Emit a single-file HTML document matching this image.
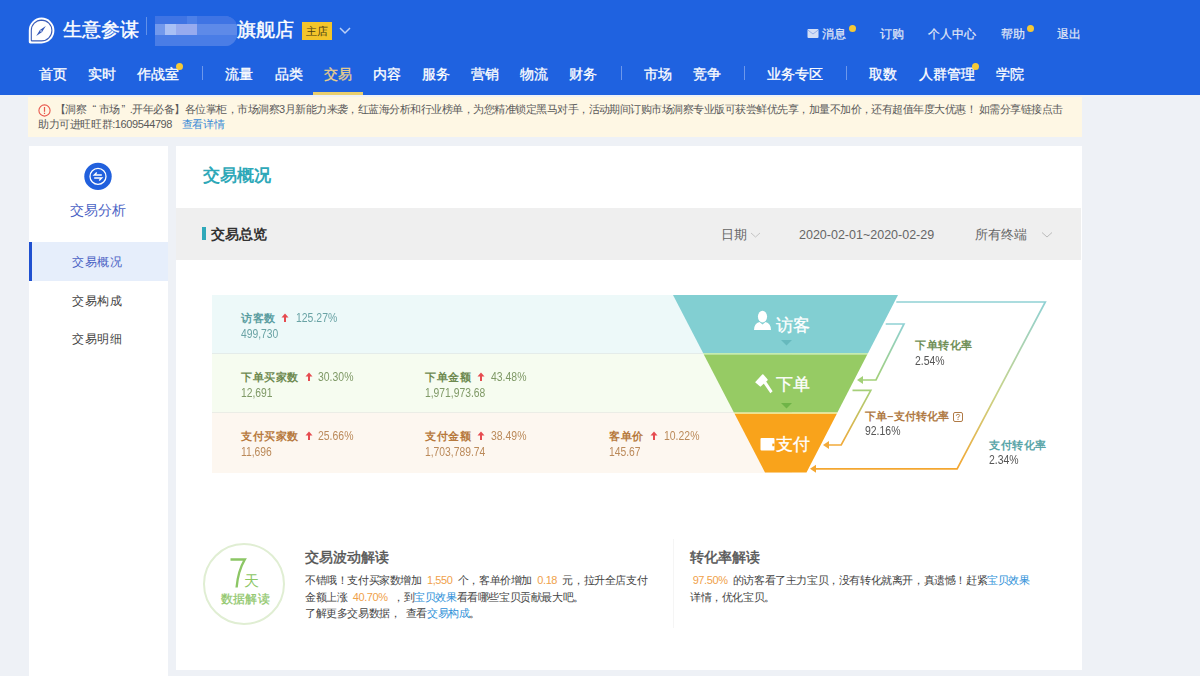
<!DOCTYPE html>
<html><head><meta charset="utf-8">
<style>
*{margin:0;padding:0;box-sizing:border-box}
html,body{width:1200px;height:676px;overflow:hidden;background:#eef1f6;font-family:"Liberation Sans",sans-serif;color:#333}
.abs{position:absolute;white-space:nowrap}
#hdr{position:absolute;left:0;top:0;width:1200px;height:95px;background:#1f62e0}
.nav{position:absolute;top:65px;-webkit-text-stroke:0.3px currentColor;font-size:14px;color:#fff;line-height:18px}
.dot{position:absolute;width:7px;height:7px;border-radius:50%;background:#f5c936}
.vdiv{position:absolute;top:66px;width:1px;height:14px;background:rgba(255,255,255,.35)}
.tr{position:absolute;top:26px;font-size:12px;-webkit-text-stroke:0.2px currentColor;color:#e3e9f7;line-height:16px}
#notice{position:absolute;left:28px;top:97px;width:1054px;height:40px;background:#fef7e4}
#side{position:absolute;left:29px;top:146px;width:139px;height:530px;background:#fff}
#main{position:absolute;left:176px;top:146px;width:906px;height:524px;background:#fff}
.lb{position:absolute;font-size:11px;line-height:14px;font-weight:bold;white-space:nowrap;letter-spacing:0.6px}
.pc{position:absolute;font-size:12px;line-height:14px;white-space:nowrap;transform:scaleX(0.87);transform-origin:0 0}
.vl{position:absolute;font-size:12px;line-height:14px;white-space:nowrap;transform:scaleX(0.86);transform-origin:0 0}
.up{position:absolute;width:8px;height:9px}
</style></head><body>
<div id="hdr">
  <!-- logo -->
  <svg class="abs" style="left:28px;top:17px" width="28" height="28" viewBox="0 0 28 28">
    <path d="M13.5 0.6 A12.9 12.9 0 1 1 13.5 26.4 L2.2 26.4 Q0.8 26.4 0.8 25 L0.8 13.5 A12.9 12.9 0 0 1 13.5 0.6 Z" fill="#fff"/>
    <path d="M13.5 3.1 A10.4 10.4 0 1 1 13.5 23.9 L4 23.9 Q3.3 23.9 3.3 23.2 L3.3 13.5 A10.4 10.4 0 0 1 13.5 3.1 Z" fill="#fff" stroke="#3a5cb8" stroke-width="1.1"/>
    <path d="M17.8 9.1 L14.1 15.1 L8.2 18.9 L11.9 12.9 Z" fill="#3357b8"/>
    <circle cx="13" cy="14" r="0.8" fill="#fff"/>
  </svg>
  <div class="abs" style="left:63px;top:19px;font-size:19px;color:#fff;line-height:22px;-webkit-text-stroke:0.4px #fff">生意参谋</div>
  <div class="abs" style="left:146px;top:17px;width:1px;height:18px;background:rgba(255,255,255,.3)"></div>
  <div class="abs" style="left:155px;top:16px;width:82px;height:30px;border-radius:0 12px 12px 0;overflow:hidden;background:#4c7fe6;filter:blur(0.7px)">
    <div class="abs" style="left:0;top:0;width:82px;height:8px;background:#3f74e4"></div>
    <div class="abs" style="left:32px;top:0;width:10px;height:8px;background:#4d80e8"></div>
    <div class="abs" style="left:0;top:8px;width:82px;height:11px;background:#5e8ae8"></div>
    <div class="abs" style="left:0;top:8px;width:10px;height:11px;background:#7299ec"></div>
    <div class="abs" style="left:10px;top:8px;width:11px;height:11px;background:#a9c0f5"></div>
    <div class="abs" style="left:21px;top:8px;width:21px;height:11px;background:#97abef"></div>
    <div class="abs" style="left:0;top:19px;width:82px;height:11px;background:#4a7de6"></div>
  </div>
  <div class="abs" style="left:237px;top:19px;font-size:19px;color:#fff;line-height:22px;-webkit-text-stroke:0.4px #fff">旗舰店</div>
  <div class="abs" style="left:302px;top:22px;width:30px;height:18px;background:#f3c52a;color:#4a3d12;font-size:10.5px;line-height:18px;text-align:center">主店</div>
  <svg class="abs" style="left:338px;top:26px" width="14" height="10" viewBox="0 0 14 10"><path d="M2 2 L7 7 L12 2" stroke="#bcd0f7" stroke-width="1.5" fill="none"/></svg>

  <div class="nav" style="left:39px">首页</div>
  <div class="nav" style="left:88px">实时</div>
  <div class="nav" style="left:137px">作战室</div><div class="dot" style="left:176px;top:63px"></div>
  <div class="vdiv" style="left:202px"></div>
  <div class="nav" style="left:225px">流量</div>
  <div class="nav" style="left:275px">品类</div>
  <div class="nav" style="left:324px;color:#ead08a">交易</div>
  <div class="abs" style="left:313px;top:92px;width:50px;height:3px;background:#e9cf6e"></div>
  <div class="nav" style="left:373px">内容</div>
  <div class="nav" style="left:422px">服务</div>
  <div class="nav" style="left:471px">营销</div>
  <div class="nav" style="left:520px">物流</div>
  <div class="nav" style="left:569px">财务</div>
  <div class="vdiv" style="left:621px"></div>
  <div class="nav" style="left:644px">市场</div>
  <div class="nav" style="left:693px">竞争</div>
  <div class="vdiv" style="left:744px"></div>
  <div class="nav" style="left:767px">业务专区</div>
  <div class="vdiv" style="left:846px"></div>
  <div class="nav" style="left:869px">取数</div>
  <div class="nav" style="left:919px">人群管理</div><div class="dot" style="left:972px;top:63px"></div>
  <div class="nav" style="left:996px">学院</div>

  <svg class="abs" style="left:807px;top:29px" width="12" height="9" viewBox="0 0 12 9"><rect x="0.5" y="0" width="11" height="9" rx="1" fill="#d5dff5"/><path d="M1 1.2 L6 5 L11 1.2" stroke="#8fa9e6" stroke-width="0.9" fill="none"/></svg>
  <div class="tr" style="left:822px">消息</div><div class="dot" style="left:849px;top:25px"></div>
  <div class="tr" style="left:880px">订购</div>
  <div class="tr" style="left:928px">个人中心</div>
  <div class="tr" style="left:1001px">帮助</div><div class="dot" style="left:1027px;top:25px"></div>
  <div class="tr" style="left:1057px">退出</div>
</div>

<div id="notice">
  <svg class="abs" style="left:10px;top:7px" width="13" height="13" viewBox="0 0 13 13"><circle cx="6.5" cy="6.5" r="5.6" fill="none" stroke="#e8594e" stroke-width="1.1"/><rect x="5.9" y="3" width="1.2" height="4.8" fill="#e8594e"/><rect x="5.9" y="8.7" width="1.2" height="1.3" fill="#e8594e"/></svg>
  <div id="n1" class="abs" style="left:27px;top:5px;font-size:11px;line-height:15px;color:#5a5a5a;letter-spacing:-0.52px">【洞察<span style="margin:0 3px 0 6px">“</span>市场<span style="margin:0 5px 0 2px">”</span>.开年必备】各位掌柜，市场洞察3月新能力来袭，红蓝海分析和行业榜单，为您精准锁定黑马对手，活动期间订购市场洞察专业版可获尝鲜优先享，加量不加价，还有超值年度大优惠！ 如需分享链接点击</div>
  <div id="n2" class="abs" style="left:10px;top:20px;font-size:11px;line-height:15px;color:#5a5a5a;letter-spacing:-0.4px">助力可进旺旺群:1609544798 <span style="color:#3a8ad6;margin-left:7px">查看详情</span></div>
</div>
<div id="side">
  <svg class="abs" style="left:55px;top:16px" width="28" height="29" viewBox="0 0 28 29"><circle cx="14" cy="14.4" r="13.7" fill="#2160dd"/><circle cx="14" cy="14.4" r="8" fill="none" stroke="#fff" stroke-width="1.3"/><path d="M17.8 13 H10.3 L12.8 10.6" fill="none" stroke="#fff" stroke-width="1.4"/><path d="M10.2 16 H17.7 L15.2 18.4" fill="none" stroke="#fff" stroke-width="1.4"/></svg>
  <div class="abs" style="left:41px;top:55px;font-size:14px;line-height:18px;color:#4a62c4">交易分析</div>
  <div class="abs" style="left:0;top:96px;width:139px;height:39px;background:#e6eefb"></div>
  <div class="abs" style="left:0;top:96px;width:3px;height:39px;background:#1f50d0"></div>
  <div class="abs" style="left:43px;top:108px;font-size:11.5px;line-height:16px;color:#4a62c4;letter-spacing:0.5px">交易概况</div>
  <div class="abs" style="left:43px;top:147px;font-size:11.5px;line-height:16px;color:#444;letter-spacing:0.5px">交易构成</div>
  <div class="abs" style="left:43px;top:185px;font-size:11.5px;line-height:16px;color:#444;letter-spacing:0.5px">交易明细</div>
</div>
<div id="main">
  <div class="abs" style="left:27px;top:19px;font-size:17px;line-height:22px;color:#2ea8b8;font-weight:bold">交易概况</div>
  <div class="abs" style="left:0;top:62px;width:905px;height:52px;background:#efefef">
    <div class="abs" style="left:26px;top:18.5px;width:3.5px;height:13.5px;background:#2fa9ba"></div>
    <div class="abs" style="left:35px;top:17px;font-size:14px;line-height:18px;color:#333;font-weight:bold">交易总览</div>
    <div class="abs" style="left:545px;top:19px;font-size:12.5px;line-height:16px;color:#666">日期</div>
    <svg class="abs" style="left:574px;top:23px" width="11" height="8" viewBox="0 0 11 8"><path d="M1 2 L5.5 6 L10 2" stroke="#c4c4c4" stroke-width="1" fill="none"/></svg>
    <div class="abs" style="left:623px;top:19px;font-size:12.5px;line-height:16px;color:#666">2020-02-01~2020-02-29</div>
    <div class="abs" style="left:799px;top:19px;font-size:12.5px;line-height:16px;color:#666">所有终端</div>
    <svg class="abs" style="left:865px;top:23px" width="12" height="8" viewBox="0 0 12 8"><path d="M1 1.5 L6 6 L11 1.5" stroke="#bbb" stroke-width="1" fill="none"/></svg>
  </div>
</div>

<!-- funnel rows -->
<div class="abs" style="left:212px;top:295px;width:580px;height:58px;background:#edf9f9"></div>
<div class="abs" style="left:212px;top:353px;width:580px;height:1px;background:#e4ecea"></div>
<div class="abs" style="left:212px;top:354px;width:580px;height:58px;background:#f6fcf0"></div>
<div class="abs" style="left:212px;top:412px;width:580px;height:1px;background:#ebede6"></div>
<div class="abs" style="left:212px;top:413px;width:580px;height:60px;background:#fdf7f0"></div>

<svg class="abs" style="left:0;top:0" width="1200" height="676" viewBox="0 0 1200 676">
  <defs>
    <linearGradient id="gA" gradientUnits="userSpaceOnUse" x1="0" y1="324" x2="0" y2="380"><stop offset="0" stop-color="#8fd1d4"/><stop offset="1" stop-color="#a3d078"/></linearGradient>
    <linearGradient id="gB" gradientUnits="userSpaceOnUse" x1="0" y1="390" x2="0" y2="445"><stop offset="0" stop-color="#a6d07a"/><stop offset="1" stop-color="#f2aa3a"/></linearGradient>
    <linearGradient id="gC" gradientUnits="userSpaceOnUse" x1="0" y1="302" x2="0" y2="469"><stop offset="0" stop-color="#8fd1d4"/><stop offset="0.55" stop-color="#c9d48a"/><stop offset="1" stop-color="#f4a630"/></linearGradient>
  </defs>
  <polygon points="673,295 898,295 868.1,353 703.1,353" fill="#82cfd2"/>
  <polygon points="703.1,353 868.1,353 867.3,354.5 703.8,354.5" fill="#c4ecb0"/>
  <polygon points="703.8,354.5 867.3,354.5 837.4,412.5 733.9,412.5" fill="#96cb64"/>
  <polygon points="733.9,412.5 837.4,412.5 836.7,414 734.7,414" fill="#f0e38e"/>
  <polygon points="734.7,414 836.7,414 806.5,472.5 765,472.5" fill="#f9a31b"/>
  <polygon points="781,340 792,340 786.5,345.5" fill="#66b9bd"/>
  <polygon points="781,403 792,403 786.5,408.5" fill="#6fb447"/>
  <path d="M885.7 324 H904 L876 380 H861" fill="none" stroke="url(#gA)" stroke-width="1.7"/>
  <polygon points="857,380 863,376 863,384" fill="#a3d078"/>
  <path d="M852.5 390.3 H870.8 L841.2 445 H827" fill="none" stroke="url(#gB)" stroke-width="1.7"/>
  <polygon points="823,445 829,441 829,449" fill="#f2aa3a"/>
  <path d="M896.3 302 H1045.3 L957.1 468.8 H814" fill="none" stroke="url(#gC)" stroke-width="1.7"/>
  <polygon points="810,468.8 816,464.8 816,472.8" fill="#f4a630"/>
  <!-- person icon -->
  <g fill="#fff">
    <ellipse cx="762.5" cy="316.6" rx="4.6" ry="5.8"/>
    <path d="M754 330 Q754 323.5 759.5 322 L762.5 324.5 L765.5 322 Q771 323.5 771 330 Z"/>
  </g>
  <!-- hammer icon -->
  <g fill="#fff">
    <path d="M755.1 382.2 L762.2 374.6 Q762.8 374 763.4 374.6 L767.5 379.2 Q768 379.8 767.4 380.4 L760.4 386.8 Z"/>
    <path d="M762.8 382.2 L765.2 380 L772.6 391.2 L770.4 393.2 Z"/>
  </g>
  <!-- wallet icon -->
  <rect x="760.5" y="438" width="14" height="12.6" rx="1" fill="#fff"/>
  <rect x="772.3" y="443.6" width="2.2" height="2.6" fill="#f9a31b"/>
</svg>
<div class="abs" style="left:776px;top:315.5px;font-size:17px;line-height:20px;color:#fff;-webkit-text-stroke:0.3px #fff">访客</div>
<div class="abs" style="left:776px;top:375px;font-size:17px;line-height:20px;color:#fff;-webkit-text-stroke:0.3px #fff">下单</div>
<div class="abs" style="left:776px;top:435px;font-size:17px;line-height:20px;color:#fff;-webkit-text-stroke:0.3px #fff">支付</div>

<div class="lb" style="left:241px;top:311px;color:#5b9ea1">访客数</div>
<svg class="up" style="left:281px;top:313px" viewBox="0 0 8 9"><path d="M4 0.5 L7.5 4.5 H5 V9 H3 V4.5 H0.5 Z" fill="#e64b50"/></svg>
<div class="pc" style="left:296px;top:311px;color:#6aa3a5">125.27%</div>
<div class="vl" style="left:241px;top:327px;color:#6aa3a5">499,730</div>

<div class="lb" style="left:241px;top:370px;color:#6e8a50">下单买家数</div>
<svg class="up" style="left:305px;top:372px" viewBox="0 0 8 9"><path d="M4 0.5 L7.5 4.5 H5 V9 H3 V4.5 H0.5 Z" fill="#e64b50"/></svg>
<div class="pc" style="left:318px;top:370px;color:#7f9966">30.30%</div>
<div class="vl" style="left:241px;top:386px;color:#7f9966">12,691</div>
<div class="lb" style="left:425px;top:370px;color:#6e8a50">下单金额</div>
<svg class="up" style="left:477px;top:372px" viewBox="0 0 8 9"><path d="M4 0.5 L7.5 4.5 H5 V9 H3 V4.5 H0.5 Z" fill="#e64b50"/></svg>
<div class="pc" style="left:491px;top:370px;color:#7f9966">43.48%</div>
<div class="vl" style="left:425px;top:386px;color:#7f9966">1,971,973.68</div>

<div class="lb" style="left:241px;top:429px;color:#b77a3e">支付买家数</div>
<svg class="up" style="left:305px;top:431px" viewBox="0 0 8 9"><path d="M4 0.5 L7.5 4.5 H5 V9 H3 V4.5 H0.5 Z" fill="#e64b50"/></svg>
<div class="pc" style="left:318px;top:429px;color:#bb8a5a">25.66%</div>
<div class="vl" style="left:241px;top:445px;color:#bb8a5a">11,696</div>
<div class="lb" style="left:425px;top:429px;color:#b77a3e">支付金额</div>
<svg class="up" style="left:477px;top:431px" viewBox="0 0 8 9"><path d="M4 0.5 L7.5 4.5 H5 V9 H3 V4.5 H0.5 Z" fill="#e64b50"/></svg>
<div class="pc" style="left:491px;top:429px;color:#bb8a5a">38.49%</div>
<div class="vl" style="left:425px;top:445px;color:#bb8a5a">1,703,789.74</div>
<div class="lb" style="left:609px;top:429px;color:#b77a3e">客单价</div>
<svg class="up" style="left:650px;top:431px" viewBox="0 0 8 9"><path d="M4 0.5 L7.5 4.5 H5 V9 H3 V4.5 H0.5 Z" fill="#e64b50"/></svg>
<div class="pc" style="left:664px;top:429px;color:#bb8a5a">10.22%</div>
<div class="vl" style="left:609px;top:445px;color:#bb8a5a">145.67</div>

<div class="lb" style="left:915px;top:338px;color:#6f8f57">下单转化率</div>
<div class="pc" style="left:915px;top:354px;color:#555">2.54%</div>
<div class="lb" style="left:865px;top:409px;color:#b07a45;letter-spacing:0.15px">下单–支付转化率</div>
<svg class="abs" style="left:952.5px;top:411.5px" width="10" height="10" viewBox="0 0 10 10"><rect x="0.5" y="0.5" width="9" height="9" rx="1.5" fill="none" stroke="#b07a45" stroke-width="1"/><path d="M3.3 3.8 Q3.3 2.3 5 2.3 Q6.7 2.3 6.7 3.6 Q6.7 4.6 5 5.2 V6.3" fill="none" stroke="#b07a45" stroke-width="0.9"/><rect x="4.5" y="7" width="1" height="1" fill="#b07a45"/></svg>
<div class="pc" style="left:865px;top:424px;color:#555">92.16%</div>
<div class="lb" style="left:989px;top:438px;color:#5aa5a8">支付转化率</div>
<div class="pc" style="left:989px;top:453px;color:#555">2.34%</div>

<!-- bottom -->
<div class="abs" style="left:203px;top:543px;width:82px;height:82px;border:2px solid #e0eed3;border-radius:50%"></div>
<svg class="abs" style="left:227px;top:556px" width="22" height="36" viewBox="0 0 22 36"><path d="M3.5 3.5 H17.8 Q11 15 9.6 31.5" fill="none" stroke="#8cc665" stroke-width="2.4"/></svg>
<div class="abs" style="left:244px;top:572px;font-size:15px;line-height:18px;color:#8cc665">天</div>
<div class="abs" style="left:221px;top:591px;font-size:12px;line-height:16px;color:#90c76b;letter-spacing:0.2px;-webkit-text-stroke:0.25px #90c76b">数据解读</div>
<div class="abs" style="left:305px;top:548px;font-size:14px;line-height:18px;color:#555;-webkit-text-stroke:0.45px #555">交易波动解读</div>
<div class="abs" style="left:305px;top:572px;font-size:11px;line-height:16.5px;color:#444;letter-spacing:-0.4px">不错哦！支付买家数增加 <span style="color:#f0a14a">&nbsp;1,550&nbsp;</span> 个，客单价增加 <span style="color:#f0a14a">&nbsp;0.18&nbsp;</span> 元，拉升全店支付<br>金额上涨 <span style="color:#f0a14a">&nbsp;40.70%&nbsp;</span> ，到<span style="color:#2d8fd8">宝贝效果</span>看看哪些宝贝贡献最大吧。<br>了解更多交易数据，&nbsp; 查看<span style="color:#2d8fd8">交易构成</span>。</div>
<div class="abs" style="left:673px;top:539px;width:1px;height:89px;background:#f5f5f5"></div>
<div class="abs" style="left:690px;top:548px;font-size:14px;line-height:18px;color:#555;-webkit-text-stroke:0.45px #555">转化率解读</div>
<div class="abs" style="left:690px;top:572px;font-size:11px;line-height:16.5px;color:#444;letter-spacing:-0.4px"><span style="color:#f0a14a">&nbsp;97.50%&nbsp;&nbsp;</span>的访客看了主力宝贝，没有转化就离开，真遗憾！赶紧<span style="color:#2d8fd8">宝贝效果</span><br>详情，优化宝贝。</div>
</body></html>
